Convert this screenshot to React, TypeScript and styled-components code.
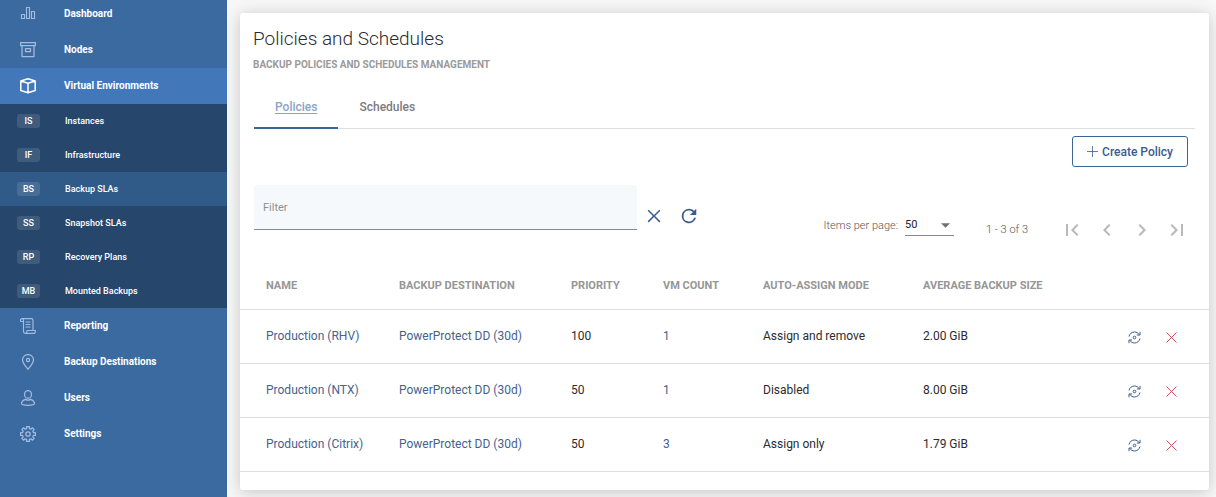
import React from "react";
import styled, { createGlobalStyle, css } from "styled-components";

const GlobalStyle = createGlobalStyle`
  *, *::before, *::after { box-sizing: border-box; }
  body {
    margin: 0;
    background: #f7f7f7;
    color: #2b2b2f;
    font-family: Roboto, "Liberation Sans", sans-serif;
    font-size: 12px;
    line-height: 16px;
  }
  button, input, select { font: inherit; }
`;

const Layout = styled.div`
  display: flex;
  min-height: 100vh;
`;

const Sidebar = styled.nav`
  flex: none;
  width: 227px;
  background: #3a6aa0;
  overflow: hidden;
`;

const NavList = styled.ul`
  list-style: none;
  margin: -4px 0 0;
  padding: 0;
`;

const SubList = styled.ul`
  list-style: none;
  margin: 0;
  padding: 0;
  background: #26466c;
`;

const NavLink = styled.a<{ $active?: boolean }>`
  display: flex;
  align-items: center;
  gap: 28px;
  height: 36px;
  padding-left: 20px;
  color: #fff;
  font-size: 10px;
  font-weight: 700;
  text-decoration: none;
  background: ${(p) => (p.$active ? "#4278ba" : "transparent")};

  svg {
    flex: none;
    width: 16px;
    height: 16px;
    color: ${(p) => (p.$active ? "#fff" : "#a3bcdf")};
  }
`;

const SubLink = styled.a<{ $active?: boolean }>`
  display: flex;
  align-items: center;
  gap: 25px;
  height: 34px;
  padding-left: 17px;
  color: #fff;
  font-size: 9px;
  font-weight: 500;
  text-decoration: none;
  background: ${(p) => (p.$active ? "#305a88" : "transparent")};
`;

const Tag = styled.span`
  width: 23px;
  border-radius: 3px;
  background: rgba(255, 255, 255, 0.12);
  line-height: 14px;
  text-align: center;
`;

const Main = styled.main`
  flex: 1;
  min-width: 0;
  padding: 13px 7px 7px 13px;
`;

const Card = styled.section`
  padding: 13px 0 18px;
  border-radius: 3px;
  background: #fff;
  box-shadow: 0 2px 16px rgba(0, 0, 0, 0.2);
`;

const Heading = styled.header`
  padding: 0 13px;
`;

const Title = styled.h1`
  margin: 0;
  font-size: 19px;
  font-weight: 300;
  line-height: 26px;
`;

const Subtitle = styled.p`
  margin: 5px 0 0;
  color: #9a9a9a;
  font-size: 10px;
  font-weight: 700;
  text-transform: uppercase;
`;

const Tabs = styled.div`
  display: flex;
  margin: 12px 14px 0;
  border-bottom: 1px solid #dedede;
`;

const Tab = styled.button<{ $active?: boolean }>`
  height: 44px;
  margin-bottom: -1px;
  padding: 2px 21px 0;
  border: 0;
  border-bottom: 2px solid transparent;
  background: none;
  color: #7c7c7c;
  font-weight: 500;
  ${(p) =>
    p.$active &&
    css`
      border-bottom-color: #3a6494;
      color: #8ba3c7;
      text-decoration: underline;
      text-underline-offset: 2px;
    `}
`;

const Actions = styled.div`
  display: flex;
  justify-content: flex-end;
  padding: 7px 21px 0;
`;

const OutlineButton = styled.button`
  display: flex;
  align-items: center;
  gap: 4px;
  height: 31px;
  padding: 0 14px;
  border: 1px solid #3a6494;
  border-radius: 3px;
  background: #fff;
  color: #3a5c90;
  font-weight: 500;
`;

const Toolbar = styled.div`
  display: flex;
  justify-content: space-between;
  align-items: flex-end;
  gap: 16px;
  padding: 18px 20px 0 14px;
`;

const FilterGroup = styled.div`
  display: flex;
  flex: 0 1 445px;
  align-items: flex-end;
  padding-bottom: 14px;
`;

const FilterInput = styled.input`
  flex: 1;
  min-width: 0;
  height: 45px;
  padding: 0 9px;
  border: 0;
  border-bottom: 1px solid #85888c;
  border-radius: 3px 3px 0 0;
  background: #f5f9fc;
  font-size: 11px;
  &::placeholder { color: #909090; opacity: 1; }
`;

const tones = { primary: "#3a5c90", muted: "#b8b8b8", danger: "#c8545c" };

const IconButton = styled.button<{ $tone?: keyof typeof tones }>`
  display: grid;
  place-items: center;
  padding: 0;
  border: 0;
  background: none;
  color: ${(p) => tones[p.$tone ?? "primary"]};
`;

const FilterButtons = styled.div`
  display: flex;
  gap: 16px;
  padding: 0 0 4px 8px;
`;

const Pager = styled.div`
  display: flex;
  align-items: center;
  color: #555;
  font-size: 11px;
  font-weight: 300;
`;

const PageSize = styled.label`
  display: flex;
  align-items: center;
  gap: 7px;
  margin-bottom: 8px;
`;

const SelectBox = styled.span`
  display: flex;
  align-items: center;
  width: 49px;
  height: 21px;
  padding-right: 4px;
  border-bottom: 1px solid #888;

  select {
    flex: 1;
    min-width: 0;
    padding: 0;
    border: 0;
    appearance: none;
    background: none;
    color: #222;
    font-weight: 400;
  }
`;

const Range = styled.span`
  margin: 0 32px;
`;

const PageButtons = styled.div`
  display: flex;
  gap: 11px;
`;

const Table = styled.table`
  width: 100%;
  margin-top: 18px;
  border-collapse: collapse;
  table-layout: fixed;
`;

const Column = styled.col<{ $width?: string }>`
  width: ${(p) => p.$width ?? "auto"};
`;

const HeadCell = styled.th`
  height: 47px;
  padding: 2px 0 0;
  border-bottom: 1px solid #dedede;
  color: #969696;
  font-size: 11px;
  font-weight: 700;
  text-align: left;
  text-transform: uppercase;
  &:first-child { padding-left: 26px; }
`;

const Cell = styled.td`
  height: 54px;
  padding: 0;
  border-bottom: 1px solid #dedede;
  &:first-child { padding-left: 26px; }
`;

const CellLink = styled.a`
  color: #465f8e;
  text-decoration: none;
`;

const RowActions = styled.div`
  display: flex;
  justify-content: flex-end;
  gap: 25px;
  padding: 2px 32px 0 0;
`;

const Stroke = ({ size = 16, box = 16, width = 1, children }: {
  size?: number; box?: number; width?: number; children: React.ReactNode;
}) => (
  <svg width={size} height={size} viewBox={`0 0 ${box} ${box}`} fill="none" stroke="currentColor"
    strokeWidth={width} strokeLinejoin="round" aria-hidden="true">
    {children}
  </svg>
);

const ChartIcon = () => (
  <Stroke width={1.15}>
    <path d="M1.5 8.500h3v4h-3zM6.500 1.500h3v11h-3zM11.500 5.500h3v7h-3z" />
  </Stroke>
);
const ArchiveIcon = () => (
  <Stroke width={1.25}>
    <path d="M.6.600h14.800v3H.600zM2 3.600v11h12v-11M5.500 6.500h5v3h-5z" />
  </Stroke>
);
const BoxIcon = () => (
  <Stroke width={1.5}>
    <path d="M8 .8l7.200 2.200v9.500L8 14.800.8 12.500V3zM.8 3L8 5.300 15.200 3M8 5.300v9.500" />
  </Stroke>
);
const ScrollIcon = () => (
  <Stroke width={1.15}>
    <path d="M3.500 3.500h-3v-1c0-1.200.6-1.900 1.500-1.900s1.500.8 1.500 1.900v11c0 1.200.7 1.900 1.800 1.900M2 .6h9.500c.9 0 1.500.8 1.500 1.900v10M5.300 15.400h9c.8 0 1.100-.9 1.100-2.900H7c0 2-.5 2.900-1.700 2.900M5.500 4h5M5.500 6.500h5M5.500 9h5" />
  </Stroke>
);
const PinIcon = () => (
  <Stroke width={1.25}>
    <path d="M8 15.300C5 11.500 2.500 8.800 2.500 5.900a5.500 5.300 0 0 1 11 0C13.500 8.800 11 11.500 8 15.300z" />
    <circle cx="8" cy="6" r="1.600" />
  </Stroke>
);
const UserIcon = () => (
  <Stroke width={1.25}>
    <ellipse cx="8" cy="4.400" rx="3.500" ry="3.800" />
    <path d="M5.500 9.400c-2.300.7-4 2-4 4.200 0 1.200 2.500 1.700 6.500 1.700s6.500-.5 6.500-1.700c0-2.200-1.700-3.500-4-4.200-1.500.9-3.500.9-5 0z" />
  </Stroke>
);
const GearIcon = () => (
  <Stroke width={1.25}>
    <path d="M6.600.6h2.800v2l1.500.6 1.500-1.400 1.800 1.800-1.400 1.500.6 1.500h2v2.800h-2l-.6 1.500 1.400 1.500-1.800 1.800-1.500-1.400-1.500.6v2H6.600v-2l-1.500-.6-1.500 1.400-1.800-1.800 1.400-1.500-.6-1.500h-2V6.600h2l.6-1.500-1.400-1.500 1.800-1.800 1.500 1.400 1.500-.6z" />
    <circle cx="8" cy="8" r="2.200" />
  </Stroke>
);
const PlusIcon = () => (
  <Stroke size={11} box={11}>
    <path d="M5.500 0v11M0 5.500h11" opacity=".8" />
  </Stroke>
);
const CloseIcon = () => (
  <svg width="18" height="18" viewBox="0 0 24 24" fill="currentColor" aria-hidden="true">
    <path d="M20.500 4.900 19.100 3.500 12 10.600 4.900 3.500 3.500 4.900l7.100 7.100-7.100 7.100 1.400 1.400 7.100-7.100 7.100 7.100 1.400-1.400-7.100-7.100z" />
  </svg>
);
const RefreshIcon = () => (
  <svg width="20" height="20" viewBox="1 1 22 22" fill="currentColor" aria-hidden="true">
    <path d="M17.650 6.350A7.960 7.960 0 0 0 12 4a8 8 0 1 0 7.730 10h-2.080A6 6 0 1 1 12 6c1.660 0 3.140.69 4.220 1.780L13 11h7V4z" />
  </svg>
);
const CaretIcon = () => (
  <svg width="9" height="5" viewBox="0 0 10 5" fill="#707070" aria-hidden="true">
    <path d="M0 0h10L5 5z" />
  </svg>
);
const pagePaths = {
  "First page": "M18.410 16.590 13.820 12l4.590-4.590L17 6l-6 6 6 6zM6 6h2v12H6z",
  "Previous page": "M15.410 7.410 14 6l-6 6 6 6 1.410-1.410L10.830 12z",
  "Next page": "M10 6 8.590 7.410 13.170 12l-4.580 4.590L10 18l6-6z",
  "Last page": "M5.590 7.410 10.180 12l-4.590 4.590L7 18l6-6-6-6zM16 6h2v12h-2z",
};
const CycleIcon = () => (
  <Stroke size={13} box={13}>
    <path d="M1 5.500C1.500 2.800 3.800 1 6.500 1c2 0 3.800 1 4.700 2.700M12 .8v3.200H8.800M12 7.500C11.500 10.200 9.200 12 6.500 12c-2 0-3.800-1-4.700-2.700M1 12.200V9h3.200" />
    <circle cx="6.500" cy="6.500" r="1.300" />
  </Stroke>
);
const RemoveIcon = () => (
  <Stroke size={11} box={11}>
    <path d="M.5.5l10 10M10.500.5l-10 10" />
  </Stroke>
);

const topItems = [
  { label: "Dashboard", Icon: ChartIcon },
  { label: "Nodes", Icon: ArchiveIcon },
];
const environmentItems = [
  ["IS", "Instances"],
  ["IF", "Infrastructure"],
  ["BS", "Backup SLAs"],
  ["SS", "Snapshot SLAs"],
  ["RP", "Recovery Plans"],
  ["MB", "Mounted Backups"],
];
const bottomItems = [
  { label: "Reporting", Icon: ScrollIcon },
  { label: "Backup Destinations", Icon: PinIcon },
  { label: "Users", Icon: UserIcon },
  { label: "Settings", Icon: GearIcon },
];
const columns = [
  { label: "Name", width: "159px" },
  { label: "Backup Destination", width: "172px" },
  { label: "Priority", width: "92px" },
  { label: "VM Count", width: "100px" },
  { label: "Auto-assign mode", width: "160px" },
  { label: "Average backup size", width: undefined },
];
const policies = [
  { name: "Production (RHV)", priority: 100, count: 1, mode: "Assign and remove", size: "2.00 GiB" },
  { name: "Production (NTX)", priority: 50, count: 1, mode: "Disabled", size: "8.00 GiB" },
  { name: "Production (Citrix)", priority: 50, count: 3, mode: "Assign only", size: "1.79 GiB" },
];

const NavItem = ({ label, Icon, active }: { label: string; Icon: React.FC; active?: boolean }) => (
  <NavLink href="#" $active={active}>
    <Icon />
    {label}
  </NavLink>
);

export default function App() {
  return (
    <Layout>
      <GlobalStyle />
      <Sidebar aria-label="Main">
        <NavList>
          {topItems.map((item) => (
            <li key={item.label}><NavItem {...item} /></li>
          ))}
          <li>
            <NavItem label="Virtual Environments" Icon={BoxIcon} active />
            <SubList>
              {environmentItems.map(([tag, label]) => (
                <li key={tag}>
                  <SubLink href="#" $active={tag === "BS"}>
                    <Tag>{tag}</Tag>
                    {label}
                  </SubLink>
                </li>
              ))}
            </SubList>
          </li>
          {bottomItems.map((item) => (
            <li key={item.label}><NavItem {...item} /></li>
          ))}
        </NavList>
      </Sidebar>
      <Main>
        <Card>
          <Heading>
            <Title>Policies and Schedules</Title>
            <Subtitle>Backup policies and schedules management</Subtitle>
          </Heading>
          <Tabs role="tablist">
            <Tab role="tab" aria-selected="true" $active>Policies</Tab>
            <Tab role="tab" aria-selected="false">Schedules</Tab>
          </Tabs>
          <Actions>
            <OutlineButton><PlusIcon />Create Policy</OutlineButton>
          </Actions>
          <Toolbar>
            <FilterGroup>
              <FilterInput type="text" placeholder="Filter" aria-label="Filter" />
              <FilterButtons>
                <IconButton aria-label="Clear filter"><CloseIcon /></IconButton>
                <IconButton aria-label="Refresh"><RefreshIcon /></IconButton>
              </FilterButtons>
            </FilterGroup>
            <Pager>
              <PageSize>
                Items per page:
                <SelectBox>
                  <select defaultValue="50">
                    <option>50</option>
                  </select>
                  <CaretIcon />
                </SelectBox>
              </PageSize>
              <Range>1 - 3 of 3</Range>
              <PageButtons>
                {Object.entries(pagePaths).map(([label, d]) => (
                  <IconButton key={label} aria-label={label} $tone="muted">
                    <svg width="24" height="24" viewBox="0 0 24 24" fill="currentColor" aria-hidden="true">
                      <path d={d} />
                    </svg>
                  </IconButton>
                ))}
              </PageButtons>
            </Pager>
          </Toolbar>
          <Table>
            <colgroup>
              {columns.map((c) => <Column key={c.label} $width={c.width} />)}
              <Column $width="120px" />
            </colgroup>
            <thead>
              <tr>
                {columns.map((c) => <HeadCell key={c.label} scope="col">{c.label}</HeadCell>)}
                <HeadCell aria-label="Actions" />
              </tr>
            </thead>
            <tbody>
              {policies.map((p) => (
                <tr key={p.name}>
                  <Cell><CellLink href="#">{p.name}</CellLink></Cell>
                  <Cell><CellLink href="#">PowerProtect DD (30d)</CellLink></Cell>
                  <Cell>{p.priority}</Cell>
                  <Cell><CellLink href="#">{p.count}</CellLink></Cell>
                  <Cell>{p.mode}</Cell>
                  <Cell>{p.size}</Cell>
                  <Cell>
                    <RowActions>
                      <IconButton aria-label={`Run ${p.name}`}><CycleIcon /></IconButton>
                      <IconButton aria-label={`Delete ${p.name}`} $tone="danger"><RemoveIcon /></IconButton>
                    </RowActions>
                  </Cell>
                </tr>
              ))}
            </tbody>
          </Table>
        </Card>
      </Main>
    </Layout>
  );
}
